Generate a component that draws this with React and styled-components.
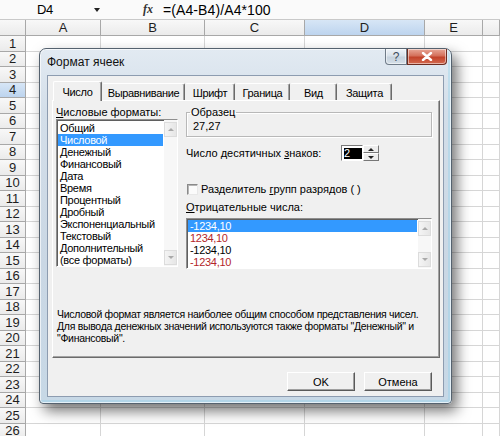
import React from 'react';
import styled, { createGlobalStyle } from 'styled-components';

const GlobalStyle = createGlobalStyle`
  html, body {
    margin: 0;
    padding: 0;
    background: #fff;
  }
  body {
    width: 500px;
    height: 436px;
    overflow: hidden;
  }
`;

const uiFont = `"Liberation Sans", Arial, sans-serif`;

// Excel sheet behind the dialog
const Screen = styled.div`
  position: relative;
  width: 500px;
  height: 436px;
  overflow: hidden;
  background: #fff;
  font-family: ${uiFont};
  color: #000;
`;

const FormulaBar = styled.div`
  display: flex;
  align-items: center;
  height: 19px;
  border-bottom: 1px solid #c9c9c9;
  background: #fafafa;
  font-size: 13px;
`;

const NameBox = styled.div`
  width: 105px;
  box-sizing: border-box;
  display: flex;
  align-items: center;
  padding-left: 37px;
  letter-spacing: -0.5px;
`;

const DropArrow = styled.span`
  margin-left: auto;
  margin-right: 5px;
  width: 0;
  height: 0;
  border-left: 3px solid transparent;
  border-right: 3px solid transparent;
  border-top: 4px solid #222;
`;

const FxMark = styled.span`
  margin-left: 38px;
  width: 20px;
  font-family: "Liberation Serif", serif;
  font-style: italic;
  font-weight: bold;
  font-size: 12px;
  color: #333;
`;

const Formula = styled.span`
  font-size: 14px;
  letter-spacing: 0.1px;
`;

const Sheet = styled.div`
  display: grid;
  grid-template-columns: 26px 75px 104px 100px 120px 58px 1fr;
  grid-template-rows: 16px;
  grid-auto-rows: 15.5px;
`;

const Head = styled.div`
  box-sizing: border-box;
  display: flex;
  align-items: center;
  justify-content: center;
  font-size: 13px;
  color: #1e1e1e;
  background: ${p => (p.$active ? 'linear-gradient(#d7e6f6, #bdd4ee)' : 'linear-gradient(#f8f8f8, #ebebeb)')};
  border-right: 1px solid #a8a8a8;
  border-bottom: 1px solid #a8a8a8;
`;

const Cell = styled.div`
  box-sizing: border-box;
  border-right: 1px solid #d6d6d6;
  border-bottom: 1px solid #d6d6d6;
`;

// Vista dialog window
const Window = styled.div`
  position: absolute;
  left: 39px;
  top: 48px;
  width: 413px;
  height: 356px;
  box-sizing: border-box;
  display: flex;
  flex-direction: column;
  padding: 0 7px 6px 7px;
  border: 1px solid #55626f;
  border-radius: 7px 7px 4px 4px;
  background: linear-gradient(180deg, #e2eaf2 0%, #d3dee9 18%, #cad7e4 60%, #c7d8e6 100%);
  box-shadow:
    inset 0 0 0 1px rgba(255, 255, 255, 0.65),
    inset -2px -2px 0 1px rgba(140, 210, 235, 0.35),
    5px 7px 14px rgba(0, 0, 0, 0.55);
`;

const TitleBar = styled.div`
  height: 26px;
  display: flex;
  align-items: flex-start;
  margin-right: -3px;
`;

const Title = styled.div`
  margin-top: 6px;
  font-size: 12px;
  line-height: 14px;
  color: #111;
`;

const CaptionButton = styled.div`
  height: 16px;
  box-sizing: border-box;
  display: flex;
  align-items: center;
  justify-content: center;
  width: ${p => (p.$close ? '40px' : '22px')};
  margin-left: ${p => (p.$close ? '0' : 'auto')};
  border: 1px solid ${p => (p.$close ? '#6d2c20' : '#6f7b88')};
  border-top: none;
  border-radius: ${p => (p.$close ? '0 0 4px 0' : '0 0 0 4px')};
  background: ${p =>
    p.$close
      ? 'linear-gradient(#e8a898 0%, #d4705b 45%, #c2432b 55%, #d46a50 100%)'
      : 'linear-gradient(#eef3f8 0%, #d8e1ea 45%, #c6d2de 55%, #d5dfe8 100%)'};
  box-shadow: inset 0 0 0 1px rgba(255, 255, 255, 0.5);
  font-size: 12px;
  color: #3d4a5a;
`;

const Content = styled.div`
  flex: 1;
  display: flex;
  flex-direction: column;
  box-sizing: border-box;
  padding: 5px 3px 5px 4px;
  border: 1px solid #8d9cb0;
  background: #f0f0f0;
  font-size: 11px;
  line-height: 12px;
`;

const TabStrip = styled.div`
  display: flex;
  align-items: flex-end;
  height: 19px;
  padding-left: 1px;
  position: relative;
  z-index: 1;
`;

const Tab = styled.div`
  width: ${p => p.$width}px;
  height: ${p => (p.$active ? 20 : 17)}px;
  margin-bottom: ${p => (p.$active ? -1 : 0)}px;
  box-sizing: border-box;
  display: flex;
  align-items: center;
  justify-content: center;
  padding-top: ${p => (p.$active ? 0 : 1)}px;
  letter-spacing: -0.35px;
  background: #f0f0f0;
  border-top: 1px solid #fff;
  border-left: 1px solid ${p => (p.$active || p.$first ? '#fff' : 'transparent')};
  border-right: 1px solid #6b6b6b;
  box-shadow: inset -1px 0 0 #a3a3a3;
  border-radius: 2px 2px 0 0;
`;

const Panel = styled.div`
  height: 258px;
  box-sizing: border-box;
  display: flex;
  flex-direction: column;
  padding: 5px 3px 0 3px;
  border: 1px solid;
  border-color: #fff #6b6b6b #6b6b6b #fff;
  box-shadow: inset -1px -1px 0 #a3a3a3;
`;

const Columns = styled.div`
  display: grid;
  grid-template-columns: 122px 246px;
  column-gap: 8px;
`;

const Column = styled.div`
  display: flex;
  flex-direction: column;
`;

const FieldLabel = styled.div`
  height: 13px;
  line-height: 13px;
  margin-top: ${p => p.$gap || 0}px;
  white-space: nowrap;
`;

const ListBox = styled.div`
  height: ${p => p.$height}px;
  margin-top: ${p => p.$gap || 0}px;
  box-sizing: border-box;
  display: flex;
  border: 1px solid;
  border-color: #8f8f8f #fff #fff #8f8f8f;
  background: #fff;
  box-shadow: inset 1px 1px 0 #5f5f5f;
`;

const Items = styled.div`
  flex: 1;
  padding: ${p => p.$pad}px 1px 0 1px;
`;

const Item = styled.div`
  height: 12px;
  line-height: 12px;
  padding-left: 2px;
  white-space: nowrap;
  letter-spacing: -0.3px;
  background: ${p => (p.$selected ? '#3399ff' : 'transparent')};
  color: ${p => (p.$selected ? '#fff' : p.$red ? '#b3262a' : '#000')};
`;

const ScrollBar = styled.div`
  width: 13px;
  display: flex;
  flex-direction: column;
  justify-content: space-between;
  padding: 2px 0 1px;
  background: #f7f7f7;
`;

const ScrollButton = styled.div`
  height: 15px;
  box-sizing: border-box;
  display: flex;
  align-items: center;
  justify-content: center;
  border: 1px solid #dcdcdc;
  background: linear-gradient(90deg, #f4f4f4, #e6e6e6);
`;

const Arrow = styled.span`
  width: 0;
  height: 0;
  border-left: 3px solid transparent;
  border-right: 3px solid transparent;
  ${p => (p.$down ? 'border-top: 3px solid #a9a9a9;' : 'border-bottom: 3px solid #a9a9a9;')}
`;

const GroupBox = styled.fieldset`
  margin: 0;
  height: 31px;
  box-sizing: border-box;
  padding: 0 0 0 3px;
  border: 1px solid #b8b8b8;
  box-shadow: inset 1px 1px 0 #fff, 1px 1px 0 #fff;
`;

const Legend = styled.legend`
  padding: 0 1px;
  line-height: 13px;
`;

const Sample = styled.div`
  margin-left: 3px;
  margin-top: 1px;
`;

const Row = styled.div`
  display: flex;
  align-items: center;
  height: ${p => p.$height}px;
  margin-top: ${p => p.$gap}px;
`;

const RowLabel = styled.span`
  width: ${p => (p.$width ? `${p.$width}px` : 'auto')};
  white-space: nowrap;
`;

const Spinner = styled.div`
  display: flex;
  height: 16px;
`;

const SpinInput = styled.div`
  width: 22px;
  box-sizing: border-box;
  padding: 2px 0 1px 2px;
  border: 1px solid;
  border-color: #7a7a7a #fff #fff #7a7a7a;
  background: #fff;
  display: flex;
`;

const SelectedText = styled.span`
  flex: 1;
  background: #000;
  color: #fff;
  line-height: 11px;
`;

const SpinButtons = styled.div`
  width: 16px;
  display: flex;
  flex-direction: column;
`;

const SpinHalf = styled.div`
  flex: 1;
  display: flex;
  align-items: center;
  justify-content: center;
  border: 1px solid;
  border-color: #fff #777 #777 #fff;
  background: #ededed;
  box-sizing: border-box;
`;

const SpinArrow = styled.span`
  width: 0;
  height: 0;
  border-left: 3px solid transparent;
  border-right: 3px solid transparent;
  ${p => (p.$down ? 'border-top: 3px solid #222;' : 'border-bottom: 3px solid #222;')}
`;

const CheckBox = styled.span`
  width: 11px;
  height: 11px;
  flex: none;
  box-sizing: border-box;
  margin: 0 3px 0 1px;
  border: 1px solid;
  border-color: #8a8a8a #e8e8e8 #e8e8e8 #8a8a8a;
  background: #fbfbfb;
  box-shadow: inset 1px 1px 0 #b5b5b5;
`;

const Description = styled.div`
  margin-top: 39px;
  padding-left: 1px;
  font-size: 10.5px;
  line-height: 12px;
  letter-spacing: -0.3px;
  white-space: nowrap;
`;

const ButtonRow = styled.div`
  display: flex;
  justify-content: flex-end;
  gap: 9px;
  margin-top: 14px;
  margin-right: 8px;
`;

const Button = styled.div`
  width: 68px;
  height: 19px;
  box-sizing: border-box;
  display: flex;
  align-items: center;
  justify-content: center;
  border: 1px solid;
  border-color: #fff #5a5a5a #5a5a5a #fff;
  box-shadow: inset -1px -1px 0 #a0a0a0;
  background: #f0f0f0;
`;

const columns = ['A', 'B', 'C', 'D', 'E', ''];
const rowCount = 26;

const formats = [
  'Общий', 'Числовой', 'Денежный', 'Финансовый', 'Дата', 'Время',
  'Процентный', 'Дробный', 'Экспоненциальный', 'Текстовый', 'Дополнительный', '(все форматы)',
];

const negatives = [
  { text: '-1234,10', selected: true },
  { text: '1234,10', red: true },
  { text: '-1234,10' },
  { text: '-1234,10', red: true },
];

const tabs = [
  { label: 'Число', width: 49 },
  { label: 'Выравнивание', width: 83 },
  { label: 'Шрифт', width: 50 },
  { label: 'Граница', width: 55 },
  { label: 'Вид', width: 47 },
  { label: 'Защита', width: 55 },
];

function VScroll() {
  return (
    <ScrollBar>
      <ScrollButton><Arrow /></ScrollButton>
      <ScrollButton><Arrow $down /></ScrollButton>
    </ScrollBar>
  );
}

export default function App() {
  return (
    <Screen>
      <GlobalStyle />
      <FormulaBar>
        <NameBox>
          D4
          <DropArrow />
        </NameBox>
        <FxMark>fx</FxMark>
        <Formula>=(A4-B4)/A4*100</Formula>
      </FormulaBar>

      <Sheet>
        <Head />
        {columns.map((c, i) => (
          <Head key={i} $active={c === 'D'}>{c}</Head>
        ))}
        {Array.from({ length: rowCount }, (_, r) => (
          <React.Fragment key={r}>
            <Head $active={r === 3}>{r + 1}</Head>
            {columns.map((c, i) => <Cell key={i} />)}
          </React.Fragment>
        ))}
      </Sheet>

      <Window>
        <TitleBar>
          <Title>Формат ячеек</Title>
          <CaptionButton>?</CaptionButton>
          <CaptionButton $close>
            <svg width="12" height="9" viewBox="0 0 12 9">
              <path d="M2 1 L10 8 M10 1 L2 8" stroke="#fff" strokeWidth="2.4" strokeLinecap="round" />
            </svg>
          </CaptionButton>
        </TitleBar>

        <Content>
          <TabStrip>
            {tabs.map((t, i) => (
              <Tab key={t.label} $width={t.width} $active={i === 0} $first={i === 0}>
                {t.label}
              </Tab>
            ))}
          </TabStrip>

          <Panel>
            <Columns>
              <Column>
                <FieldLabel><u>Ч</u>исловые форматы:</FieldLabel>
                <ListBox $height={148}>
                  <Items $pad={2}>
                    {formats.map((f, i) => (
                      <Item key={f} $selected={i === 1}>{f}</Item>
                    ))}
                  </Items>
                  <VScroll />
                </ListBox>
              </Column>

              <Column>
                <GroupBox>
                  <Legend>Образец</Legend>
                  <Sample>27,27</Sample>
                </GroupBox>

                <Row $height={16} $gap={8}>
                  <RowLabel $width={155}>Число десятичных <u>з</u>наков:</RowLabel>
                  <Spinner>
                    <SpinInput><SelectedText>2</SelectedText></SpinInput>
                    <SpinButtons>
                      <SpinHalf><SpinArrow /></SpinHalf>
                      <SpinHalf><SpinArrow $down /></SpinHalf>
                    </SpinButtons>
                  </Spinner>
                </Row>

                <Row $height={12} $gap={22}>
                  <CheckBox />
                  <RowLabel>Разделитель <u>г</u>рупп разрядов ( )</RowLabel>
                </Row>

                <FieldLabel $gap={6}><u>О</u>трицательные числа:</FieldLabel>
                <ListBox $height={51} $gap={4}>
                  <Items $pad={1}>
                    {negatives.map((n, i) => (
                      <Item key={i} $selected={n.selected} $red={n.red}>{n.text}</Item>
                    ))}
                  </Items>
                  <VScroll />
                </ListBox>
              </Column>
            </Columns>

            <Description>
              Числовой формат является наиболее общим способом представления чисел.
              <br />
              Для вывода денежных значений используются также форматы "Денежный" и
              <br />
              "Финансовый".
            </Description>
          </Panel>

          <ButtonRow>
            <Button>OK</Button>
            <Button>Отмена</Button>
          </ButtonRow>
        </Content>
      </Window>
    </Screen>
  );
}
